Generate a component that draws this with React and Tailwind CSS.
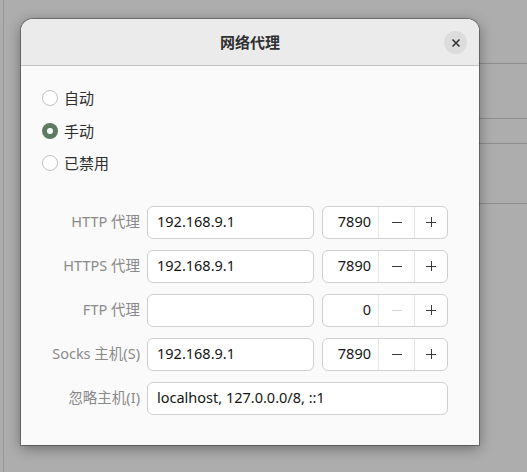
import React, { useState } from 'react'

const FONT = { fontFamily: '"Noto Sans", "Noto Sans CJK SC", sans-serif' }

function Radio({ checked, label, onClick }) {
  return (
    <div className="flex items-center h-[32.5px] cursor-pointer" onClick={onClick}>
      {checked ? (
        <div className="w-4 h-4 rounded-full bg-[#5f7a62] flex items-center justify-center">
          <div className="w-[6px] h-[6px] rounded-full bg-white" />
        </div>
      ) : (
        <div className="w-4 h-4 rounded-full bg-white border border-[#c2c2c2]" />
      )}
      <span className="ml-[6px] text-[15px] text-[#2e2e2e]">{label}</span>
    </div>
  )
}

function Minus({ disabled }) {
  return (
    <svg width="12" height="12" viewBox="0 0 12 12">
      <path d="M1 6.5h10" stroke={disabled ? '#d4d4d4' : '#3a3a3a'} strokeWidth="1" />
    </svg>
  )
}

function Plus() {
  return (
    <svg width="12" height="12" viewBox="0 0 12 12">
      <path d="M1 6.5h10M6.5 1v10" stroke="#3a3a3a" strokeWidth="1" />
    </svg>
  )
}

function SpinBox({ value }) {
  const disabled = value === 0
  return (
    <div className="flex h-[33px] w-[126px] rounded-[6px] border border-[#cfcfcf] bg-white overflow-hidden">
      <div className="w-[55px] flex items-center justify-end pr-[7px] text-[14.5px] text-[#151515]">{value}</div>
      <div className="w-[36px] border-l border-[#e6e6e6] flex items-center justify-center">
        <Minus disabled={disabled} />
      </div>
      <div className="flex-1 border-l border-[#e6e6e6] flex items-center justify-center">
        <Plus />
      </div>
    </div>
  )
}

function Entry({ value, wide }) {
  return (
    <div className={`h-[33px] ${wide ? 'w-[301px]' : 'w-[167px]'} rounded-[6px] border border-[#cfcfcf] bg-white flex items-center pl-[9px] text-[14.5px] text-[#151515]`}>
      {value}
    </div>
  )
}

const rows = [
  { label: 'HTTP 代理', host: '192.168.9.1', port: 7890 },
  { label: 'HTTPS 代理', host: '192.168.9.1', port: 7890 },
  { label: 'FTP 代理', host: '', port: 0 },
  { label: 'Socks 主机(S)', host: '192.168.9.1', port: 7890 },
]

export default function App() {
  const [mode, setMode] = useState('manual')

  return (
    <div className="relative w-[527px] h-[472px] bg-[#adadad] overflow-hidden" style={FONT}>
      {/* background window bits */}
      <div className="absolute left-[3px] top-0 bottom-0 w-px bg-[#989898]" />
      <div className="absolute left-[479px] right-0 top-[63px] h-px bg-[#8e8e8e]" />
      <div className="absolute left-[479px] right-0 top-[118px] h-px bg-[#8e8e8e]" />
      <div className="absolute left-[479px] right-0 top-[143px] h-px bg-[#8e8e8e]" />
      <div className="absolute left-[479px] right-0 top-[203px] h-px bg-[#8e8e8e]" />

      {/* dialog */}
      <div className="absolute left-[21px] top-[19px] w-[458px] h-[426px] bg-[#fafafa] rounded-t-[12px] ring-1 ring-black/30 shadow-[0_3px_14px_rgba(0,0,0,0.4)] flex flex-col">
        <div className="h-[47px] shrink-0 bg-[#ebebeb] rounded-t-[12px] border-b border-[#c4c4c4] flex items-center justify-center relative">
          <span className="text-[15px] font-bold text-[#303030]">网络代理</span>
          <div className="absolute right-[12px] top-[12px] w-[23px] h-[23px] rounded-full bg-[#dcdcdc] flex items-center justify-center">
            <svg width="10" height="10" viewBox="0 0 10 10">
              <path d="M1.5 1.5l7 7M8.5 1.5l-7 7" stroke="#2e2e2e" strokeWidth="1.5" />
            </svg>
          </div>
        </div>

        <div className="pt-[16px] pl-[21px] pr-[31px] flex flex-col">
          <Radio checked={mode === 'auto'} label="自动" onClick={() => setMode('auto')} />
          <Radio checked={mode === 'manual'} label="手动" onClick={() => setMode('manual')} />
          <Radio checked={mode === 'off'} label="已禁用" onClick={() => setMode('off')} />

          <div className="mt-[26px] flex flex-col gap-[11px]">
            {rows.map(r => (
              <div key={r.label} className="flex items-center">
                <div className="w-[98px] text-right text-[14.5px] text-[#8a8a8a] pr-0">{r.label}</div>
                <div className="ml-[7px]"><Entry value={r.host} /></div>
                <div className="ml-[8px]"><SpinBox value={r.port} /></div>
              </div>
            ))}
            <div className="flex items-center">
              <div className="w-[98px] text-right text-[14.5px] text-[#8a8a8a]">忽略主机(I)</div>
              <div className="ml-[7px]"><Entry value="localhost, 127.0.0.0/8, ::1" wide /></div>
            </div>
          </div>
        </div>
      </div>
    </div>
  )
}
